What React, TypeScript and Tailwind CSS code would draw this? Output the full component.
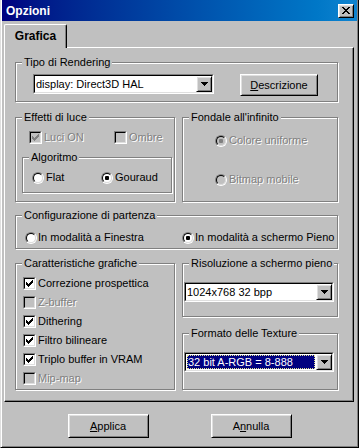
import type { ReactNode } from "react";

const raised =
  "border border-t-white border-l-white border-r-black border-b-black shadow-[inset_1px_1px_0_#dfdfdf,inset_-1px_-1px_0_#808080] bg-[#c0c0c0]";
const sunkenOuter = "border border-t-[#808080] border-l-[#808080] border-r-white border-b-white";
const sunkenInner = "border border-t-black border-l-black border-r-[#dfdfdf] border-b-[#dfdfdf]";

function Txt({ disabled, children }: { disabled?: boolean; children: ReactNode }) {
  return (
    <span className={disabled ? "text-[#808080] [text-shadow:1px_1px_0_#fff] whitespace-nowrap" : "whitespace-nowrap"}>
      {children}
    </span>
  );
}

function GroupBox({ label, className, children }: { label: string; className: string; children?: ReactNode }) {
  return (
    <div className={`border border-[#808080] shadow-[inset_1px_1px_0_#fff,1px_1px_0_#fff] ${className}`}>
      <div className="-mt-[7px] ml-[6px] w-fit bg-[#c0c0c0] px-[2px] leading-[13px] whitespace-nowrap">{label}</div>
      {children}
    </div>
  );
}

function Check({ checked, disabled }: { checked?: boolean; disabled?: boolean }) {
  return (
    <div className={`w-[13px] h-[13px] shrink-0 ${sunkenOuter}`}>
      <div className={`w-full h-full flex items-center justify-center ${sunkenInner} ${disabled ? "bg-[#c0c0c0]" : "bg-white"}`}>
        {checked && (
          <svg width="7" height="7" viewBox="0 0 7 7" shapeRendering="crispEdges">
            <path
              fill={disabled ? "#808080" : "#000"}
              d="M6 0h1v1H6z M5 1h2v1H5z M0 2h1v1H0z M4 2h3v1H4z M0 3h2v1H0z M3 3h3v1H3z M0 4h5v1H0z M1 5h3v1H1z M2 6h1v1H2z"
            />
          </svg>
        )}
      </div>
    </div>
  );
}

function Radio({ checked, disabled }: { checked?: boolean; disabled?: boolean }) {
  return (
    <div className="w-[12px] h-[12px] shrink-0 rounded-full border border-t-[#808080] border-l-[#808080] border-r-white border-b-white">
      <div
        className={`w-full h-full rounded-full flex items-center justify-center border border-t-black border-l-black border-r-[#dfdfdf] border-b-[#dfdfdf] ${disabled ? "bg-[#c0c0c0]" : "bg-white"}`}
      >
        {checked && <div className={`w-[4px] h-[4px] rounded-[1px] ${disabled ? "bg-[#808080]" : "bg-black"}`} />}
      </div>
    </div>
  );
}

function Arrow() {
  return (
    <svg width="7" height="4" viewBox="0 0 7 4" shapeRendering="crispEdges">
      <path fill="#000" d="M0 0h7v1H0z M1 1h5v1H1z M2 2h3v1H2z M3 3h1v1H3z" />
    </svg>
  );
}

function Combo({ className, value, selected }: { className: string; value: string; selected?: boolean }) {
  return (
    <div className={`h-[20px] shrink-0 ${sunkenOuter} ${className}`}>
      <div className={`h-full flex bg-white ${sunkenInner}`}>
        <div className="flex-1 min-w-0 h-full p-[1px]">
          <div
            className={`h-full flex items-center whitespace-nowrap ${
              selected ? "bg-[#000080] text-white pl-[1px] outline outline-1 outline-dotted outline-[#e0e090] -outline-offset-1" : ""
            }`}
          >
            {value}
          </div>
        </div>
        <div className={`w-[16px] h-full flex items-center justify-center ${raised}`}>
          <Arrow />
        </div>
      </div>
    </div>
  );
}

export default function App() {
  return (
    <div className="w-[359px] h-[448px] overflow-hidden bg-[#c0c0c0] text-[11px] text-black font-['Liberation_Sans',Arial,sans-serif] border-l border-r border-b border-l-[#dfdfdf] border-r-black border-b-black shadow-[inset_1px_0_0_#fff,inset_-1px_-1px_0_#808080]">
      {/* Title bar */}
      <div className="ml-[1px] w-[355px] h-[21px] flex items-center justify-between pl-[4px] pr-[3px] bg-gradient-to-r from-[#000080] to-[#1084d0]">
        <span className="text-white font-bold text-[12px]">Opzioni</span>
        <div className={`w-[16px] h-[14px] flex items-center justify-center ${raised}`}>
          <svg width="8" height="7" viewBox="0 0 8 7" shapeRendering="crispEdges">
            <path
              fill="#000"
              d="M0 0h2v1H0z M6 0h2v1H6z M1 1h2v1H1z M5 1h2v1H5z M2 2h4v1H2z M3 3h2v1H3z M2 4h4v1H2z M1 5h2v1H1z M5 5h2v1H5z M0 6h2v1H0z M6 6h2v1H6z"
            />
          </svg>
        </div>
      </div>

      {/* Tab */}
      <div className="ml-[3px] mt-[3px] relative z-10 -mb-[1px] w-[63px] h-[24px] flex items-center justify-center pb-[1px] bg-[#c0c0c0] rounded-t-[2px] border-l border-t border-r border-l-white border-t-white border-r-black shadow-[inset_-1px_0_0_#808080]">
        <span className="font-bold text-[12px]">Grafica</span>
      </div>

      {/* Tab panel */}
      <div className="ml-[3px] w-[350px] h-[355px] pt-[14px] pl-[10px] border border-t-white border-l-white border-r-black border-b-black shadow-[inset_-1px_-1px_0_#808080]">
        <GroupBox label="Tipo di Rendering" className="w-[323px] h-[40px]">
          <div className="flex items-start gap-[26px] mt-[5px] pl-[17px]">
            <Combo className="w-[181px]" value="display: Direct3D HAL" />
            <div className={`w-[78px] h-[22px] flex items-center justify-center ${raised}`}>
              <span>
                <span className="underline underline-offset-1">D</span>escrizione
              </span>
            </div>
          </div>
        </GroupBox>

        <div className="flex gap-[7px] mt-[15px]">
          <GroupBox label="Effetti di luce" className="w-[160px] h-[85px]">
            <div className="flex mt-[7px] pl-[13px]">
              <div className="flex items-center gap-[2px] w-[85px] h-[13px]">
                <Check checked disabled />
                <Txt disabled>Luci ON</Txt>
              </div>
              <div className="flex items-center gap-[2px] h-[13px]">
                <Check disabled />
                <Txt disabled>Ombre</Txt>
              </div>
            </div>
            <GroupBox label="Algoritmo" className="ml-[6px] mt-[13px] w-[150px] h-[36px]">
              <div className="flex mt-[7px] pl-[9px]">
                <div className="flex items-center gap-[2px] w-[69px] h-[13px]">
                  <Radio />
                  <Txt>Flat</Txt>
                </div>
                <div className="flex items-center gap-[2px] h-[13px]">
                  <Radio checked />
                  <Txt>Gouraud</Txt>
                </div>
              </div>
            </GroupBox>
          </GroupBox>

          <GroupBox label="Fondale all'infinito" className="w-[156px] h-[85px]">
            <div className="flex flex-col gap-[26px] mt-[10px] pl-[32px]">
              <div className="flex items-center gap-[2px] h-[13px]">
                <Radio checked disabled />
                <Txt disabled>Colore uniforme</Txt>
              </div>
              <div className="flex items-center gap-[2px] h-[13px]">
                <Radio disabled />
                <Txt disabled>Bitmap mobile</Txt>
              </div>
            </div>
          </GroupBox>
        </div>

        <GroupBox label="Configurazione di partenza" className="mt-[13px] w-[323px] h-[34px]">
          <div className="flex mt-[9px] pl-[9px]">
            <div className="flex items-center gap-[1px] w-[157px] h-[13px]">
              <Radio />
              <Txt>In modalità a Finestra</Txt>
            </div>
            <div className="flex items-center gap-[1px] h-[13px]">
              <Radio checked />
              <Txt>In modalità a schermo Pieno</Txt>
            </div>
          </div>
        </GroupBox>

        <div className="flex gap-[7px] mt-[14px]">
          <GroupBox label="Caratteristiche grafiche" className="w-[160px] h-[127px]">
            <div className="flex flex-col gap-[6px] mt-[7px] pl-[7px]">
              {[
                { t: "Correzione prospettica", c: true, d: false },
                { t: "Z-buffer", c: false, d: true },
                { t: "Dithering", c: true, d: false },
                { t: "Filtro bilineare", c: true, d: false },
                { t: "Triplo buffer in VRAM", c: true, d: false },
                { t: "Mip-map", c: false, d: true },
              ].map((r) => (
                <div key={r.t} className="flex items-center gap-[2px] h-[13px]">
                  <Check checked={r.c} disabled={r.d} />
                  <Txt disabled={r.d}>{r.t}</Txt>
                </div>
              ))}
            </div>
          </GroupBox>

          <div className="flex flex-col">
            <GroupBox label="Risoluzione a schermo pieno" className="w-[156px] h-[54px]">
              <div className="mt-[12px] pl-[1px]">
                <Combo className="w-[150px]" value="1024x768 32 bpp" />
              </div>
            </GroupBox>
            <GroupBox label="Formato delle Texture" className="mt-[16px] w-[156px] h-[57px]">
              <div className="mt-[12px] pl-[1px]">
                <Combo className="w-[150px]" value="32 bit A-RGB = 8-888" selected />
              </div>
            </GroupBox>
          </div>
        </div>
      </div>

      {/* Bottom buttons */}
      <div className="flex justify-center gap-[62px] mt-[12px]">
        <div className={`w-[81px] h-[24px] flex items-center justify-center ${raised}`}>
          <span>
            <span className="underline underline-offset-1">A</span>pplica
          </span>
        </div>
        <div className={`w-[81px] h-[24px] flex items-center justify-center ${raised}`}>
          <span>
            A<span className="underline underline-offset-1">n</span>nulla
          </span>
        </div>
      </div>
    </div>
  );
}
